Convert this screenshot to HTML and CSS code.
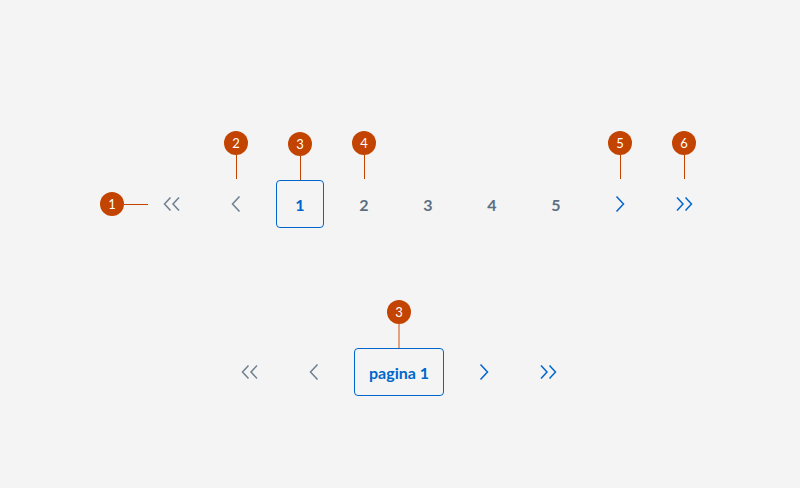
FILE: index.html
```html
<!DOCTYPE html>
<html lang="it">
<head>
<meta charset="utf-8">
<title>Paginazione</title>
<link rel="stylesheet" href="styles.css">
</head>
<body>
<main class="page">
  <nav class="pager pager-full">
    <span class="item icon muted">
      <span class="badge badge-left"><span class="dot">1</span><span class="hline"></span></span>
      <svg width="18" height="14" viewBox="0 0 18 14"><polyline points="7.5,0.5 1.5,7 7.5,13.5"/><polyline points="16,0.5 10,7 16,13.5"/></svg>
    </span>
    <span class="item icon muted">
      <span class="badge badge-top"><span class="dot">2</span><span class="vline"></span></span>
      <svg width="10" height="16" viewBox="0 0 10 16"><polyline points="8.5,0.5 1.5,8 8.5,15.5"/></svg>
    </span>
    <span class="item current">
      <span class="badge badge-top"><span class="dot">3</span><span class="vline"></span></span>
      1
    </span>
    <span class="item num">
      <span class="badge badge-top"><span class="dot">4</span><span class="vline"></span></span>
      2
    </span>
    <span class="item num">3</span>
    <span class="item num">4</span>
    <span class="item num">5</span>
    <span class="item icon active">
      <span class="badge badge-top"><span class="dot">5</span><span class="vline"></span></span>
      <svg width="10" height="16" viewBox="0 0 10 16"><polyline points="1.5,0.5 8.5,8 1.5,15.5"/></svg>
    </span>
    <span class="item icon active">
      <span class="badge badge-top"><span class="dot">6</span><span class="vline"></span></span>
      <svg width="18" height="14" viewBox="0 0 18 14"><polyline points="2,0.5 8,7 2,13.5"/><polyline points="10.5,0.5 16.5,7 10.5,13.5"/></svg>
    </span>
  </nav>

  <nav class="pager pager-compact">
    <span class="item icon muted">
      <svg width="18" height="14" viewBox="0 0 18 14"><polyline points="7.5,0.5 1.5,7 7.5,13.5"/><polyline points="16,0.5 10,7 16,13.5"/></svg>
    </span>
    <span class="item icon muted">
      <svg width="10" height="16" viewBox="0 0 10 16"><polyline points="8.5,0.5 1.5,8 8.5,15.5"/></svg>
    </span>
    <span class="item current wide">
      <span class="badge badge-top badge-soft"><span class="dot">3</span><span class="vline"></span></span>
      pagina 1
    </span>
    <span class="item icon active">
      <svg width="10" height="16" viewBox="0 0 10 16"><polyline points="1.5,0.5 8.5,8 1.5,15.5"/></svg>
    </span>
    <span class="item icon active">
      <svg width="18" height="14" viewBox="0 0 18 14"><polyline points="2,0.5 8,7 2,13.5"/><polyline points="10.5,0.5 16.5,7 10.5,13.5"/></svg>
    </span>
  </nav>
</main>
</body>
</html>
```

FILE: styles.css
```css
html, body {
  margin: 0;
  padding: 0;
  background: #f4f4f4;
  width: 800px;
  height: 488px;
  overflow: hidden;
}

.page {
  padding-top: 180px;
  font-family: "Lato", "Noto Sans", sans-serif;
}

.pager {
  display: flex;
  gap: 16px;
}

.pager-full {
  margin-left: 148px;
}

.pager-compact {
  margin-left: 226px;
  margin-top: 120px;
}

.item {
  position: relative;
  width: 48px;
  height: 48px;
  box-sizing: border-box;
  display: flex;
  align-items: center;
  justify-content: center;
  font-size: 16px;
  font-weight: 700;
}

.num {
  color: #5c6f82;
}

.current {
  color: #0066cc;
  border: 1px solid #0066cc;
  border-radius: 4px;
}

.current.wide {
  width: 90px;
  padding: 0;
}

.icon svg {
  fill: none;
  stroke-width: 1.5;
  stroke-linecap: butt;
  stroke-linejoin: miter;
}

.muted svg {
  stroke: #6f7f8f;
}

.active svg {
  stroke: #0066cc;
}

.badge {
  position: absolute;
  display: flex;
  align-items: center;
}

.badge-top {
  flex-direction: column;
  left: 50%;
  top: -49px;
  transform: translateX(-12px);
}

.badge-left {
  right: 100%;
  top: 50%;
  margin-top: -12px;
  flex-direction: row;
}

.dot {
  width: 24px;
  height: 24px;
  border-radius: 50%;
  background: #c34300;
  color: #ffffff;
  font-family: "Lato", "Noto Sans", sans-serif;
  font-size: 13px;
  font-weight: 400;
  display: flex;
  align-items: center;
  justify-content: center;
}

.vline {
  width: 1px;
  height: 24px;
  background: #c34300;
}

.hline {
  width: 24px;
  height: 1px;
  background: #c34300;
}

.badge-soft .vline {
  width: 2px;
  background: #e3a27f;
}
```
